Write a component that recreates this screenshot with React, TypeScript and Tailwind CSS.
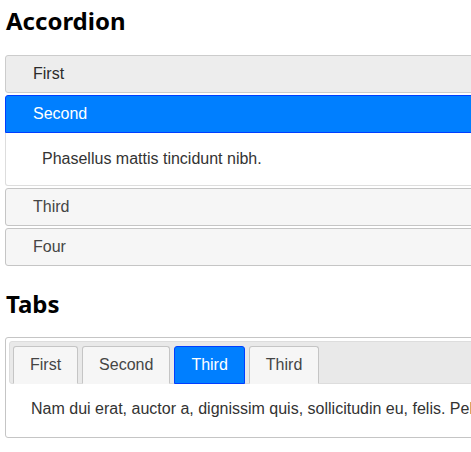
const sections = ["First", "Second", "Third", "Four"];
const tabs = ["First", "Second", "Third", "Third"];

function AccordionHeader({ label, active, hover }: { label: string; active?: boolean; hover?: boolean }) {
  const tone = active
    ? "bg-[#007fff] border-[#003eff] text-white rounded-t-[3px]"
    : hover
      ? "bg-[#ededed] border-[#cccccc] text-[#2b2b2b] rounded-[3px]"
      : "bg-[#f6f6f6] border-[#c5c5c5] text-[#454545] rounded-[3px]";
  return (
    <div className={`h-[38px] border pl-[27px] flex items-center text-[16px] ${tone}`}>
      {label}
    </div>
  );
}

export default function App() {
  return (
    <div className="w-[471px] h-[452px] overflow-hidden bg-white font-['Liberation_Sans',Arial,sans-serif]">
      <div className="w-[900px] pl-[5px]">
        <h2 className="pt-[5px] pl-[1px] text-[24px] leading-[31px] font-bold text-black font-['Noto_Sans',sans-serif]">
          Accordion
        </h2>
        <div className="mt-[19px] flex flex-col gap-[2px]">
          {sections.map((s, i) => (
            <div key={s}>
              <AccordionHeader label={s} active={i === 1} hover={i === 0} />
              {i === 1 && (
                <div className="border border-t-0 border-[#dddddd] rounded-b-[3px] px-[36px] pt-[16px] pb-[17px] leading-[19px] text-[16px] text-[#333333]">
                  Phasellus mattis tincidunt nibh.
                </div>
              )}
            </div>
          ))}
        </div>

        <h2 className="mt-[22px] pl-[1px] text-[24px] leading-[31px] font-bold text-black font-['Noto_Sans',sans-serif]">
          Tabs
        </h2>
        <div className="mt-[18px] border border-[#c5c5c5] rounded-[3px] p-[3px]">
          <div className="flex gap-[4px] bg-[#e9e9e9] border border-[#dddddd] rounded-[3px] pl-[3px] pt-[4px] -mb-[1px]">
            {tabs.map((t, i) => (
              <div
                key={i}
                className={`h-[38px] -mb-[1px] px-[16px] flex items-center border rounded-t-[3px] text-[16px] ${
                  i === 2
                    ? "bg-[#007fff] border-[#003eff] text-white"
                    : "bg-[#f6f6f6] border-[#c5c5c5] border-b-[#f6f6f6] text-[#454545]"
                }`}
              >
                {t}
              </div>
            ))}
          </div>
          <div className="px-[22px] pt-[16px] pb-[16px] leading-[19px] text-[16px] text-[#333333] whitespace-nowrap">
            Nam dui erat, auctor a, dignissim quis, sollicitudin eu, felis. Pellentesque nisi urna, interdum eget, sagittis et, consequat vestibulum, lacus.
          </div>
        </div>
      </div>
    </div>
  );
}
